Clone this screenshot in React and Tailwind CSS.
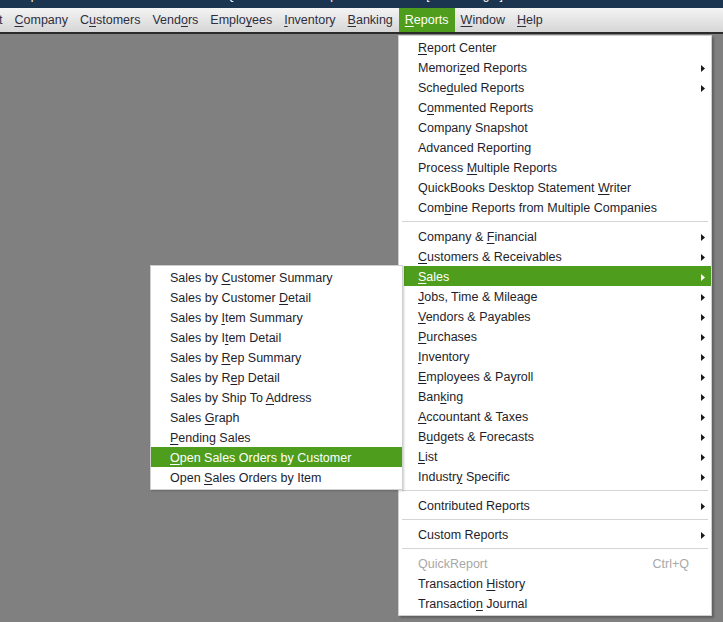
import React from 'react';

// "~" marks the access-key letter that gets underlined
function Label({ text }) {
  const i = text.indexOf('~');
  if (i < 0) return <span className="whitespace-pre">{text}</span>;
  return (
    <span className="whitespace-pre">
      {text.slice(0, i)}
      <span className="underline underline-offset-2">{text[i + 1]}</span>
      {text.slice(i + 2)}
    </span>
  );
}

function Arrow({ white }) {
  return (
    <svg width="4" height="7" viewBox="0 0 4 7" className="shrink-0">
      <polygon points="0,0 4,3.5 0,7" fill={white ? '#ffffff' : '#1a1a1a'} />
    </svg>
  );
}

const topItems = ['t', '~Company', 'C~ustomers', 'Vend~ors', 'Emplo~yees', '~Inventory', '~Banking', '~Reports', '~Window', '~Help'];

const reportSections = [
  [
    { t: '~Report Center' },
    { t: 'Memori~zed Reports', sub: true },
    { t: 'Sche~duled Reports', sub: true },
    { t: 'C~ommented Reports' },
    { t: 'Company Snapshot' },
    { t: 'Advanced Reporting' },
    { t: 'Process ~Multiple Reports' },
    { t: 'QuickBooks Desktop Statement ~Writer' },
    { t: 'Com~bine Reports from Multiple Companies' },
  ],
  [
    { t: 'Company & ~Financial', sub: true },
    { t: '~Customers & Receivables', sub: true },
    { t: '~Sales', sub: true, active: true },
    { t: '~Jobs, Time & Mileage', sub: true },
    { t: '~Vendors & Payables', sub: true },
    { t: '~Purchases', sub: true },
    { t: '~Inventory', sub: true },
    { t: '~Employees & Payroll', sub: true },
    { t: 'Ban~king', sub: true },
    { t: '~Accountant & Taxes', sub: true },
    { t: 'B~udgets & Forecasts', sub: true },
    { t: '~List', sub: true },
    { t: 'Industr~y Specific', sub: true },
  ],
  [{ t: 'Contributed Reports', sub: true }],
  [{ t: 'Custom Reports', sub: true }],
  [
    { t: 'QuickReport', disabled: true, key: 'Ctrl+Q' },
    { t: 'Transaction ~History' },
    { t: 'Transactio~n Journal' },
  ],
];

const salesItems = [
  'Sales by ~Customer Summary',
  'Sales by Customer ~Detail',
  'Sales by ~Item Summary',
  'Sales by I~tem Detail',
  'Sales by ~Rep Summary',
  'Sales by R~ep Detail',
  'Sales by Ship To ~Address',
  'Sales ~Graph',
  '~Pending Sales',
  '~Open Sales Orders by Customer',
  'Open ~Sales Orders by Item',
];

export default function App() {
  return (
    <div
      className="relative w-[723px] h-[622px] overflow-hidden bg-[#808080] text-[12.5px] text-[#1e1e2c]"
      style={{ fontFamily: "'Liberation Sans', Arial, sans-serif" }}
    >
      {/* Title bar (mostly cut off) */}
      <div className="h-[8px] bg-[#1b3450] overflow-hidden">
        <div className="-mt-[12px] pl-[6px] text-white text-[12px] leading-[14px] whitespace-nowrap">
          Sample Rock Castle Construction - Intuit QuickBooks Desktop Pro Plus 2024 - [ Home Page ]
        </div>
      </div>

      {/* Menu bar */}
      <div className="flex h-[26px] items-stretch bg-gradient-to-b from-[#f4f4f4] to-[#d6d6d6] border-b-2 border-[#2a2a2a]">
        <div className="flex -ml-[7px] text-[#2e2e3e]">
          {topItems.map((t) => {
            const active = t === '~Reports';
            return (
              <div
                key={t}
                className={`flex items-center px-[6px] pt-[1px] ${active ? 'bg-[#4f9d1c] text-white' : ''}`}
              >
                <Label text={t} />
              </div>
            );
          })}
        </div>
      </div>

      {/* Reports menu */}
      <div className="absolute left-[398px] top-[35px] w-[314px] bg-white border border-[#cfcfcf] pt-[1px] pb-[2px] shadow-[2px_2px_2px_rgba(0,0,0,0.25)]">
        {reportSections.map((section, si) => (
          <div key={si}>
            {si > 0 && (
              <div className="h-[9px] flex items-center px-[3px]">
                <div className="h-px w-full bg-[#d4d4d4]" />
              </div>
            )}
            {section.map((it) => (
              <div
                key={it.t}
                className={`flex items-center h-[20px] pt-[2px] ml-[5px] pl-[14px] pr-[6px] ${
                  it.active ? 'bg-[#4f9d1c] text-white' : ''
                } ${it.disabled ? 'text-[#a8a8a8]' : ''}`}
              >
                <span className="flex-1">
                  <Label text={it.t} />
                </span>
                {it.key && <span className="pr-[16px] text-[#a8a8a8]">{it.key}</span>}
                {it.sub && <Arrow white={it.active} />}
              </div>
            ))}
          </div>
        ))}
      </div>

      {/* Sales submenu */}
      <div className="absolute left-[150px] top-[265px] w-[253px] bg-white border border-[#cfcfcf] pt-[1px] pb-[2px] shadow-[1px_1px_2px_rgba(0,0,0,0.2)]">
        {salesItems.map((t) => {
          const active = t === '~Open Sales Orders by Customer';
          return (
            <div
              key={t}
              className={`flex items-center h-[20px] pt-[2px] pl-[19px] ${
                active ? 'bg-[#4f9d1c] text-white' : ''
              }`}
            >
              <Label text={t} />
            </div>
          );
        })}
      </div>
    </div>
  );
}
